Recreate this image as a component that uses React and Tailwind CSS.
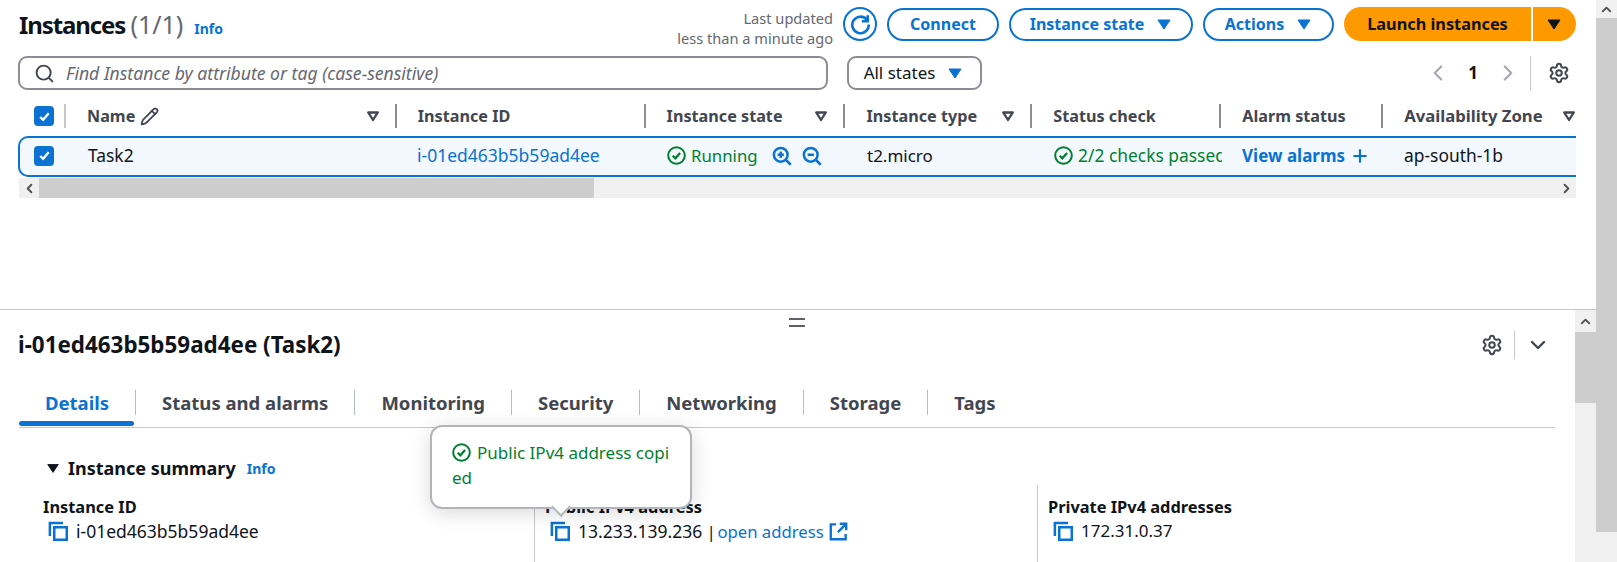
import React from 'react';
import { Search, Settings, Pencil, ChevronLeft, ChevronRight, ChevronDown, ChevronUp, Plus } from 'lucide-react';

const CheckCircle = ({ className }) => (
  <svg viewBox="0 0 16 16" fill="none" stroke="currentColor" strokeWidth="1.7" className={className}>
    <circle cx="8" cy="8" r="7" />
    <path d="M4.8 8.2l2.2 2.2 4-4.6" strokeWidth="1.9" />
  </svg>
);

const Copy = () => (
  <svg viewBox="0 0 16 16" fill="none" stroke="#0972d3" strokeWidth="2" className="w-[20px] h-[20px] shrink-0">
    <path d="M1.5 12V1.5H12" />
    <rect x="5" y="5" width="10" height="10" />
  </svg>
);

const Caret = ({ color = '#0972d3', className = 'w-[16px] h-[16px]' }) => (
  <svg viewBox="0 0 16 16" className={className}>
    <path d="M2 4h12L8 13z" fill={color} stroke={color} strokeWidth="1" strokeLinejoin="round" />
  </svg>
);

const SortDown = () => (
  <svg viewBox="0 0 16 16" fill="none" stroke="#424650" strokeWidth="2.6" strokeLinejoin="round" className="w-[14px] h-[14px] shrink-0">
    <path d="M2.5 4h11L8 12.5z" />
  </svg>
);

const Zoom = ({ plus }) => (
  <svg viewBox="0 0 16 16" fill="none" stroke="#0972d3" strokeWidth="2" className="w-[20px] h-[20px]">
    <circle cx="7" cy="7" r="5.5" />
    <path d="M11 11l4 4M4.5 7h5" />
    {plus && <path d="M7 4.5v5" />}
  </svg>
);

const Check = () => (
  <div className="w-[20px] h-[20px] rounded-[4px] bg-[#0972d3] flex items-center justify-center">
    <svg viewBox="0 0 16 16" fill="none" stroke="white" strokeWidth="2.4" className="w-[15px] h-[15px]"><path d="M3.5 8.5l3 3 6-7" /></svg>
  </div>
);

const Pill = ({ children, className }) => (
  <button className={`h-[33px] rounded-full border-2 border-[#0972d3] flex items-center justify-center gap-[12px] font-bold text-[16px] text-[#0972d3] ${className}`}>
    {children}
  </button>
);

const HeadCell = ({ label, filter, className, children }) => (
  <div className={`flex items-center h-[24px] border-r-2 border-[#8c8c94] pl-[21px] pr-[15px] justify-between font-bold text-[16.2px] text-[#424650] ${className}`}>
    <span className="flex items-center gap-[5px] whitespace-nowrap">{label}{children}</span>
    {filter && <SortDown />}
  </div>
);

const Tab = ({ label, active, last }) => (
  <div className={`relative px-[26px] h-[25px] flex items-center font-bold text-[18.5px] ${active ? 'text-[#0972d3]' : 'text-[#424650]'} ${last ? '' : 'border-r border-[#b6bec9]'}`}>
    {label}
    {active && <div className="absolute left-0 right-[1px] top-[31px] h-[5px] rounded-full bg-[#0972d3]" />}
  </div>
);

const Detail = ({ label, children, className }) => (
  <div className={className}>
    <div className="font-bold text-[16.4px] text-[#0f141a] leading-[22px] whitespace-nowrap">{label}</div>
    <div className="flex items-center pl-[5px] gap-[8px] h-[26px] leading-[26px]">
      <Copy />
      <span className="whitespace-nowrap">{children}</span>
    </div>
  </div>
);

export default function App() {
  return (
    <div className="w-[1617px] h-[562px] overflow-hidden flex bg-white text-[#0f141a] text-[17px] font-['Noto_Sans',sans-serif]">
      <div className="w-[1596px] flex flex-col">
        {/* instances panel */}
        <div className="h-[310px] shrink-0 border-b border-[#c6c6cd] pl-[19px] pr-[20px]">
          <div className="flex items-center justify-between h-[34px] mt-[7px]">
            <div className="flex items-baseline">
              <h1 className="text-[24px] font-bold leading-[34px] tracking-[-1.1px]">
                Instances <span className="font-normal text-[25px] tracking-normal text-[#656871]">(1/1)</span>
              </h1>
              <span className="ml-[11px] text-[14px] font-bold text-[#0972d3]">Info</span>
            </div>
            <div className="flex items-center">
              <div className="text-right text-[14.6px] leading-[20px] pt-[7px] text-[#656871] mr-[10px]">
                <div>Last updated</div>
                <div>less than a minute ago</div>
              </div>
              <button className="w-[34px] h-[34px] rounded-full border-2 border-[#0972d3] flex items-center justify-center">
                <svg viewBox="0 0 16 16" fill="none" stroke="#0972d3" strokeWidth="2" className="w-[21px] h-[21px]">
                  <path d="M13 4.5A6.3 6.3 0 1 0 14.3 8" />
                  <path d="M13.5 1v4.5H9" />
                </svg>
              </button>
              <Pill className="w-[112px] ml-[10px]">Connect</Pill>
              <Pill className="w-[184px] ml-[10px]">Instance state <Caret /></Pill>
              <Pill className="w-[131px] ml-[10px]">Actions <Caret /></Pill>
              <div className="flex h-[34px] ml-[10px] text-[16.3px] font-bold text-[#0f141a]">
                <button className="w-[187px] bg-[#ff9900] rounded-l-full">Launch instances</button>
                <button className="w-[43px] ml-[2px] bg-[#ff9900] rounded-r-full flex items-center justify-center pr-[2px]">
                  <Caret color="#0f141a" />
                </button>
              </div>
            </div>
          </div>

          <div className="flex items-center mt-[15px] h-[34px]">
            <div className="w-[810px] -ml-[1px] h-[34px] rounded-[9px] border-2 border-[#8c8c94] flex items-center pl-[14px] gap-[11px] italic text-[17.6px] text-[#656871]">
              <Search size={21} strokeWidth={2.2} className="text-[#424650]" />
              Find Instance by attribute or tag (case-sensitive)
            </div>
            <div className="w-[135px] h-[34px] ml-[19px] pr-[2px] rounded-[9px] border-2 border-[#8c8c94] flex items-center justify-center gap-[12px]">
              All states <Caret />
            </div>
            <div className="ml-auto flex items-center">
              <ChevronLeft size={26} strokeWidth={2} className="text-[#a8a8ae]" />
              <span className="font-bold mx-[17px]">1</span>
              <ChevronRight size={26} strokeWidth={2} className="text-[#a8a8ae]" />
              <div className="w-px h-[34px] bg-[#c6c6cd] ml-[9px] mr-[17px]" />
              <Settings size={22} strokeWidth={2.2} className="text-[#424650] mr-[6px]" />
            </div>
          </div>

          {/* table header */}
          <div className="flex items-center h-[36px] mt-[10px] pb-[4px]">
            <div className="w-[47px] h-[24px] shrink-0 border-r-2 border-[#c6c6cd] pl-[15px] flex items-center">
              <Check />
            </div>
            <HeadCell label="Name" filter className="w-[331px]"><Pencil size={19} strokeWidth={2.2} /></HeadCell>
            <HeadCell label="Instance ID" className="w-[249px]" />
            <HeadCell label="Instance state" filter className="w-[200px]" />
            <HeadCell label="Instance type" filter className="w-[187px]" />
            <HeadCell label="Status check" className="w-[189px]" />
            <HeadCell label="Alarm status" className="w-[162px]" />
            <div className="pl-[21px] w-[193px] flex items-center justify-between font-bold text-[16.7px] text-[#424650] whitespace-nowrap overflow-hidden">
              Availability Zone <SortDown />
            </div>
          </div>

          {/* selected row */}
          <div className="flex items-center h-[41px] -ml-[1px] pb-[2px] border-y-2 border-l-2 border-[#0972d3] rounded-l-[10px] bg-[#f2f8fd]">
            <div className="w-[46px] shrink-0 pl-[14px]">
              <Check />
            </div>
            <div className="w-[331px] pl-[22px] text-[17.4px]">Task2</div>
            <div className="w-[249px] pl-[20px] text-[17.5px] text-[#0972d3]">i-01ed463b5b59ad4ee</div>
            <div className="w-[200px] pl-[21px] flex items-center text-[16.8px] text-[#00802f]">
              <CheckCircle className="w-[19px] h-[19px] mr-[5px]" />Running
              <span className="flex gap-[10px] ml-[14px]"><Zoom plus /><Zoom /></span>
            </div>
            <div className="w-[187px] pl-[21px]">t2.micro</div>
            <div className="w-[189px] pl-[21px] flex items-center text-[17.4px] text-[#00802f] overflow-hidden whitespace-nowrap">
              <CheckCircle className="w-[19px] h-[19px] mr-[5px] shrink-0" />2/2 checks passed
            </div>
            <div className="w-[162px] pl-[20px] flex items-center font-bold text-[#0972d3]">
              View alarms <Plus size={20} strokeWidth={2.6} className="ml-[5px]" />
            </div>
            <div className="pl-[20px] text-[17.4px]">ap-south-1b</div>
          </div>

          {/* horizontal scrollbar */}
          <div className="flex h-[20px] mt-[1px] bg-[#f0f0f0]">
            <div className="w-[20px] flex items-center justify-center bg-[#f0f0f0]"><ChevronLeft size={15} strokeWidth={3} className="text-[#505050]" /></div>
            <div className="w-[555px] bg-[#cdcdcd]" />
            <div className="ml-auto w-[20px] flex items-center justify-center"><ChevronRight size={15} strokeWidth={3} className="text-[#505050]" /></div>
          </div>
        </div>

        {/* details panel */}
        <div className="relative flex flex-1 min-h-0">
          <div className="flex flex-col gap-[5px] absolute left-[789px] top-[8px]">
            <div className="w-[16px] h-[2px] bg-[#5f6068]" />
            <div className="w-[16px] h-[2px] bg-[#5f6068]" />
          </div>

          <div className="w-[1575px] pl-[19px] pr-[20px] relative">
            <div className="flex items-center justify-between h-[30px] mt-[20px]">
              <h2 className="text-[22.4px] font-bold -ml-[1px]">i-01ed463b5b59ad4ee (Task2)</h2>
              <div className="flex items-center mr-[5px]">
                <Settings size={22} strokeWidth={2.2} className="text-[#424650]" />
                <div className="w-px h-[28px] bg-[#c6c6cd] mx-[11px]" />
                <ChevronDown size={24} strokeWidth={2.4} className="text-[#424650]" />
              </div>
            </div>

            <div className="flex items-center mt-[23px] border-b border-[#c6c6cd] pb-[5px] h-[45px]">
              <Tab label="Details" active />
              <Tab label="Status and alarms" />
              <Tab label="Monitoring" />
              <Tab label="Security" />
              <Tab label="Networking" />
              <Tab label="Storage" />
              <Tab label="Tags" last />
            </div>

            <div className="flex items-center mt-[27px] ml-[27px] h-[26px]">
              <Caret color="#0f141a" className="w-[14px] h-[14px]" />
              <span className="ml-[8px] font-bold text-[18px]">Instance summary</span>
              <span className="ml-[11px] text-[14px] font-bold text-[#0972d3]">Info</span>
            </div>

            <div className="grid grid-cols-3 w-[1509px] ml-[12px] mt-[4px] h-[80px]">
              <Detail label="Instance ID" className="pl-[12px] pt-[11px]">
                <span className="text-[17.5px]">i-01ed463b5b59ad4ee</span>
              </Detail>
              <Detail label="Public IPv4 address" className="pl-[10px] pt-[11px] border-l border-[#c6c6cd]">
                <span className="text-[17.5px]">13.233.139.236</span> <span className="text-[#0f141a]">|</span> <span className="text-[16.7px] -ml-[3px] text-[#0972d3]">open address</span>
                <svg viewBox="0 0 16 16" fill="none" stroke="#0972d3" strokeWidth="2" className="inline w-[19px] h-[19px] ml-[5px] -mt-[2px]">
                  <path d="M6 2H1.5v12.5H14V10M9 1.5h5.5V7M14 2L7.5 8.5" />
                </svg>
              </Detail>
              <Detail label="Private IPv4 addresses" className="pl-[10px] pt-[11px] border-l border-[#c6c6cd]">172.31.0.37</Detail>
            </div>

            {/* copied popover */}
            <div className="absolute left-[430px] top-[115px] w-[262px] h-[84px] rounded-[12px] border-2 border-[#b4b4bb] bg-white shadow-[0_4px_20px_rgba(0,7,22,0.15)] pl-[20px] pr-[20px] pt-[13px] text-[#00802f] leading-[25px] break-all">
              <CheckCircle className="inline w-[19px] h-[19px] mr-[6px] -mt-[3px]" />Public IPv4 address copied
              <div className="absolute left-[122px] bottom-[-7px] w-[14px] h-[14px] rotate-45 bg-white border-r-2 border-b-2 border-[#b4b4bb]" />
            </div>
          </div>

          <div className="w-[21px] bg-[#f0f0f0] flex flex-col">
            <div className="h-[22px] flex items-center justify-center"><ChevronUp size={15} strokeWidth={3} className="text-[#505050]" /></div>
            <div className="h-[71px] bg-[#cdcdcd]" />
          </div>
        </div>
      </div>

      {/* page scrollbar */}
      <div className="w-[21px] bg-[#f0f0f0] flex flex-col">
        <div className="h-[18px] flex items-center justify-center"><ChevronUp size={15} strokeWidth={3} className="text-[#505050]" /></div>
        <div className="h-[514px] bg-[#cdcdcd]" />
      </div>
    </div>
  );
}
